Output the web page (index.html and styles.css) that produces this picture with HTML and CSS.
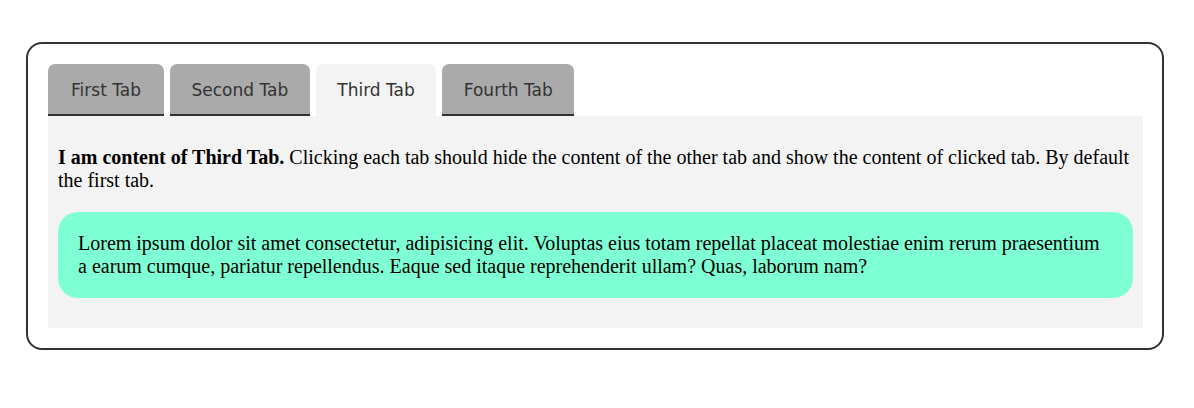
FILE: index.html
```html
<!DOCTYPE html>
<html lang="en">
<head>
<meta charset="utf-8">
<title>Tabs</title>
<link rel="stylesheet" href="styles.css">
</head>
<body>
<div class="wrap">
  <div class="tabs">
    <button class="tab">First Tab</button>
    <button class="tab">Second Tab</button>
    <button class="tab active">Third Tab</button>
    <button class="tab">Fourth Tab</button>
  </div>
  <div class="panel">
    <p class="intro"><b>I am content of Third Tab.</b> Clicking each tab should hide the content of the other tab and show the content of clicked tab. By default the first tab.</p>
    <div class="note">Lorem ipsum dolor sit amet consectetur, adipisicing elit. Voluptas eius totam repellat placeat molestiae enim rerum praesentium a earum cumque, pariatur repellendus. Eaque sed itaque reprehenderit ullam? Quas, laborum nam?</div>
  </div>
</div>
</body>
</html>
```
FILE: styles.css
```css
html, body {
  margin: 0;
  padding: 0;
  background: #fff;
}
body {
  font-family: "Liberation Serif", "Times New Roman", serif;
  font-size: 20px;
  color: #000;
}
.wrap {
  margin: 42px 30px 0 26px;
  border: 2px solid #333;
  border-radius: 16px;
  padding: 20px 19px 20px 20px;
}
.tabs {
  display: flex;
  gap: 6px;
  align-items: flex-end;
}
.tab {
  font-family: "DejaVu Sans", Verdana, sans-serif;
  font-size: 17px;
  line-height: 20px;
  color: #333;
  background: #aaa;
  border: none;
  border-bottom: 2px solid #333;
  border-radius: 7px 7px 0 0;
  padding: 16px 21.5px 14px;
  min-width: 116px;
  margin: 0;
  text-align: center;
  cursor: pointer;
}
.tab.active {
  background: #f3f3f3;
  border-bottom: none;
  padding: 16px 21.5px 16px;
}
.panel {
  background: #f3f3f3;
  padding: 10px;
}
.intro {
  margin: 20px 0;
}
.note {
  background: #7fffd4;
  border-radius: 20px;
  padding: 20px;
  margin: 20px 0;
}
```
